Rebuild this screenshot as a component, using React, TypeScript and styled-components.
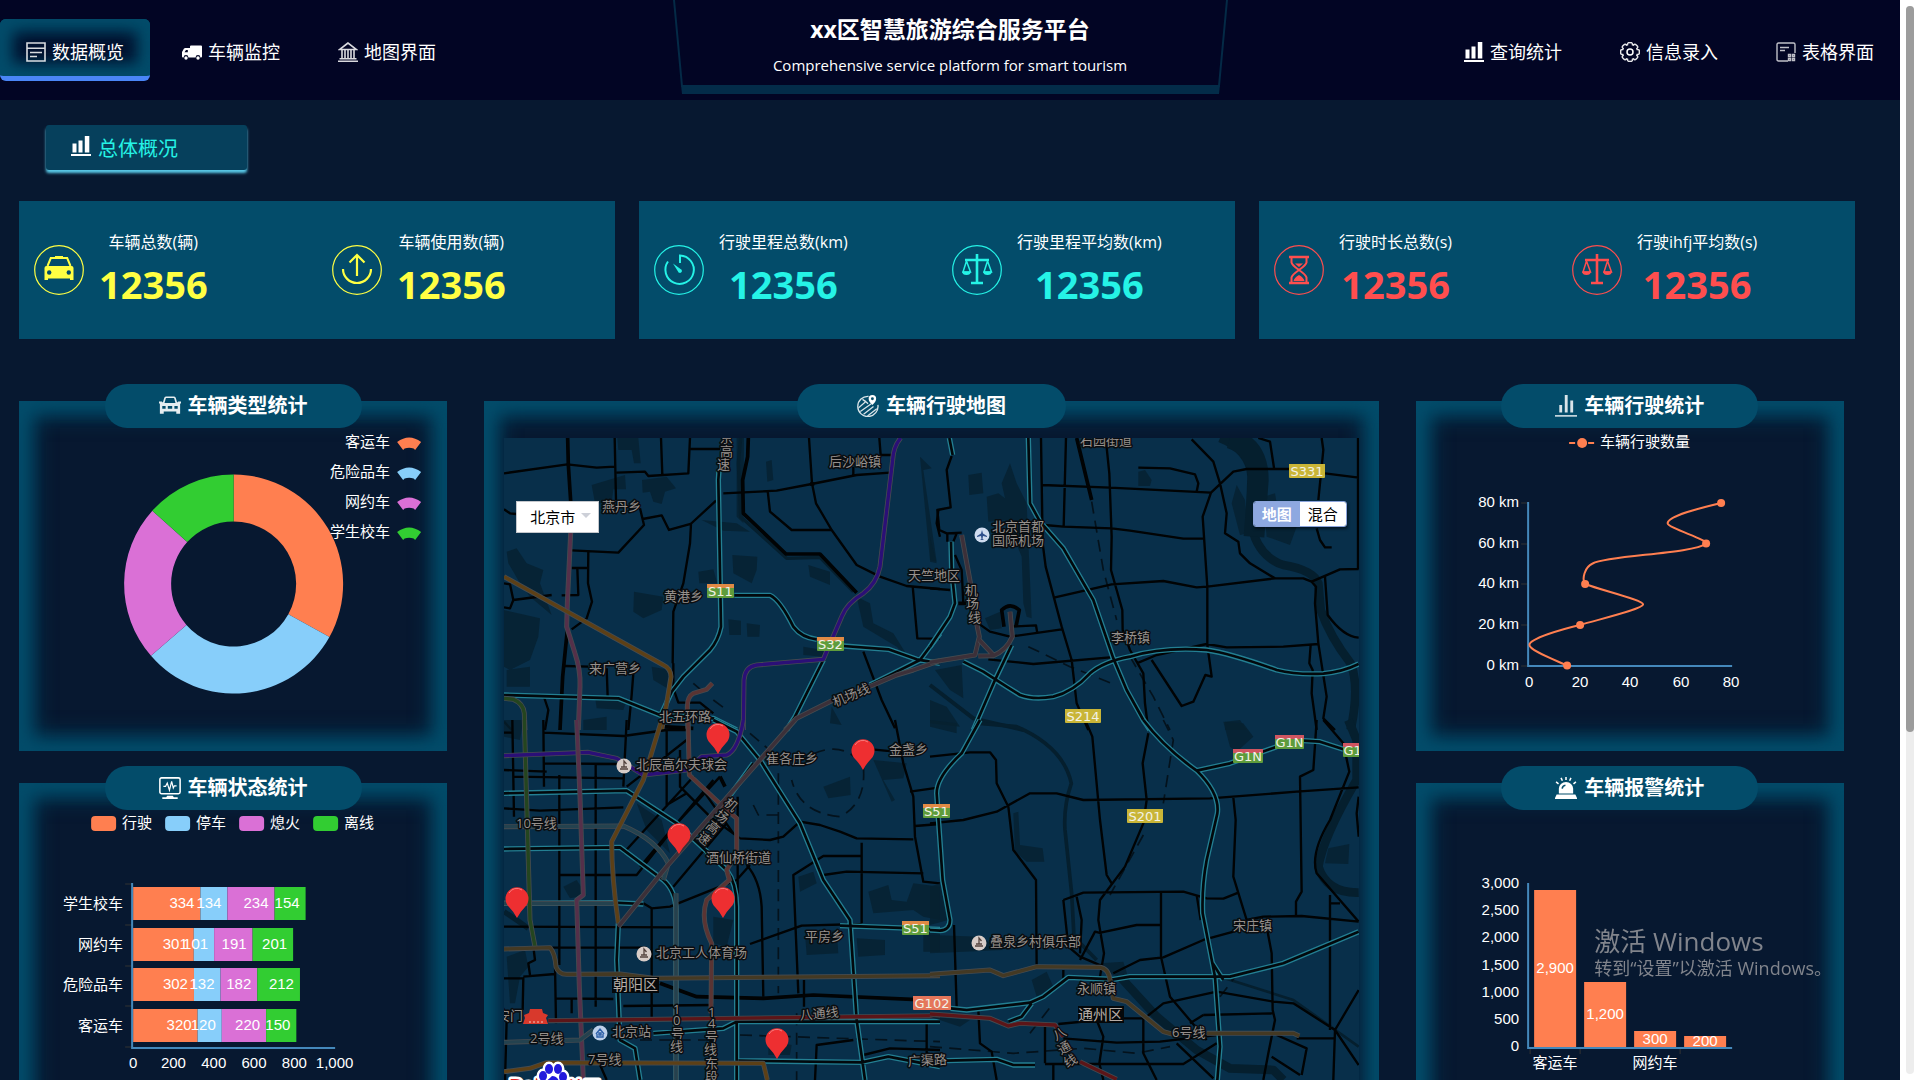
import React from "react";
import styled, { createGlobalStyle, css } from "styled-components";

const colors = {
  page: "#071830",
  header: "#020524",
  panel: "#034c6a",
  axis: "#4488bb",
  orange: "#ff7f50",
  blue: "#87cefa",
  purple: "#da70d6",
  green: "#32cd32",
};

const uiFont = '"Open Sans", "Noto Sans CJK SC", sans-serif';
const chartFont = '"Liberation Sans", "Noto Sans CJK SC", sans-serif';

const GlobalStyle = createGlobalStyle`
  * { box-sizing: border-box; }
  body {
    margin: 0;
    background: ${colors.page};
    color: #fff;
    font-family: ${uiFont};
    overflow: hidden;
  }
  h1, h2, h3, p, ul, dl, dd { margin: 0; padding: 0; }
`;

const innerGlow = (offset: number, blur: number) => css`
  box-shadow:
    inset ${offset}px 0 ${blur}px ${colors.panel},
    inset -${offset}px 0 ${blur}px ${colors.panel},
    inset 0 ${offset}px ${blur}px ${colors.panel},
    inset 0 -${offset}px ${blur}px ${colors.panel};
`;

/* ---------- shell ---------- */

const Shell = styled.div`
  display: flex;
  height: 100vh;
  overflow: hidden;
`;

const Page = styled.div`
  flex: 1;
  min-width: 0;
`;

const ScrollRail = styled.div`
  flex: 0 0 20px;
  padding: 6px;
  background: #fff;
`;

const ScrollTrack = styled.div`
  height: 100%;
  border-radius: 4px;
  background: #ededed;
`;

const ScrollThumb = styled.div`
  height: 68%;
  border-radius: 4px;
  background: #9c9c9c;
`;

/* ---------- header ---------- */

const Header = styled.header`
  display: flex;
  justify-content: space-between;
  height: 100px;
  background: ${colors.header};
`;

const Nav = styled.nav`
  display: flex;
  gap: 6px;
  padding-top: 19px;
`;

const NavLink = styled.a<{ $active?: boolean }>`
  display: flex;
  align-items: center;
  justify-content: center;
  gap: 6px;
  width: 150px;
  height: 62px;
  padding-top: 8px;
  border-bottom: 5px solid transparent;
  border-radius: 6px;
  color: #fff;
  font-size: 18px;
  line-height: 24px;
  text-decoration: none;
  ${(p) =>
    p.$active &&
    css`
      background: #030f2c;
      border-bottom-color: #4a86f7;
      ${innerGlow(12, 18)}
    `}
`;

const Brand = styled.div`
  position: relative;
  width: 555px;
  padding-top: 14px;
  text-align: center;
`;

const BrandFrame = styled.svg`
  position: absolute;
  top: 0;
  left: 0;
  width: 100%;
  height: 96px;
`;

const BrandTitle = styled.h1`
  position: relative;
  font-size: 23px;
  line-height: 30px;
`;

const BrandSubtitle = styled.p`
  position: relative;
  padding-top: 9px;
  font-size: 15px;
  line-height: 24px;
`;

/* ---------- overview ---------- */

const SectionTag = styled.h2`
  display: flex;
  gap: 7px;
  width: 201px;
  height: 45px;
  margin: 25px 0 0 46px;
  padding: 9px 25px;
  border-radius: 3px;
  background: #06405c;
  box-shadow: 0 3px 3px #5acbea;
  color: #25f3e6;
  font-size: 20px;
  font-weight: 400;
  line-height: 30px;

  svg {
    margin-top: 2px;
    color: #fff;
  }
`;

const StatRow = styled.section`
  display: grid;
  grid-template-columns: repeat(3, 1fr);
  gap: 24px;
  padding: 31px 45px 0 19px;
`;

const StatCard = styled.div`
  display: grid;
  grid-template-columns: 1fr 1fr;
  height: 138px;
  background: ${colors.panel};
`;

const Stat = styled.dl<{ $color: string }>`
  display: flex;
  gap: 15px;
  padding: 28px 0 0 15px;
  color: ${(p) => p.$color};
`;

const StatBadge = styled.span`
  margin-top: 16px;
  width: 50px;
  height: 50px;
`;

const StatText = styled.div`
  text-align: center;
`;

const StatLabel = styled.dt`
  color: #fff;
  font-size: 16px;
  line-height: 26px;
`;

const StatValue = styled.dd`
  font-size: 38px;
  font-weight: 700;
  line-height: 58px;
`;

/* ---------- panels ---------- */

const Board = styled.main`
  display: grid;
  grid-template-columns: 428fr 894fr 428fr;
  gap: 37px;
  padding: 62px 56px 0 19px;
`;

const Column = styled.div`
  display: flex;
  flex-direction: column;
  gap: 32px;
`;

const PanelBox = styled.section<{ $tall?: boolean }>`
  height: ${(p) => (p.$tall ? "732px" : "350px")};
  ${innerGlow(14, 22)}
`;

const PanelTitle = styled.h3<{ $share: string }>`
  position: relative;
  display: flex;
  align-items: center;
  justify-content: center;
  gap: 7px;
  width: ${(p) => p.$share};
  height: 44px;
  margin: -17px auto 0;
  border-radius: 22px;
  background: ${colors.panel};
  font-size: 20px;
  line-height: 28px;
`;

const Chart = styled.svg`
  display: block;
  width: 100%;
  height: 323px;
  font-family: ${chartFont};
  font-size: 15px;
`;

const ChartText = styled.text`
  fill: #fff;
`;

/* ---------- map ---------- */

const MapArea = styled.div`
  position: relative;
  height: 682px;
  margin: 10px 20px 0;
  overflow: hidden;
  background: #082f4a;
`;

const MapCanvas = styled.svg`
  display: block;
  width: 100%;
  height: 100%;
  font-family: ${uiFont};
`;

const MapLabel = styled.text`
  fill: #96908c;
  stroke: #0a0d10;
  stroke-width: 3px;
  stroke-linejoin: round;
  paint-order: stroke;
  font-size: 13px;
`;

const DistrictLabel = styled.text`
  fill: #b5aca6;
  font-size: 15px;
`;

const ShieldText = styled.text`
  fill: #f2f2e6;
  font-family: "DejaVu Sans", sans-serif;
  font-size: 13px;
  text-anchor: middle;
`;

const CityPicker = styled.label`
  position: absolute;
  top: 63px;
  left: 12px;
`;

const CitySelect = styled.select`
  width: 83px;
  height: 32px;
  padding: 0 0 0 13px;
  border: 1px solid #c4c7cc;
  border-radius: 0;
  appearance: none;
  background: #fff;
  color: #000;
  font-family: ${uiFont};
  font-size: 15px;
`;

const Caret = styled.span`
  position: absolute;
  top: 12px;
  right: 8px;
  border: 5px solid transparent;
  border-top-color: #cdd0d8;
  pointer-events: none;
`;

const LayerSwitch = styled.div`
  position: absolute;
  top: 63px;
  right: 12px;
  display: flex;
  border: 1px solid #8ba4dc;
  border-radius: 3px;
  overflow: hidden;
  box-shadow: 1px 2px 3px rgba(0, 0, 0, 0.5);
`;

const LayerButton = styled.button<{ $active?: boolean }>`
  width: 46px;
  height: 24px;
  padding: 0;
  border: 0;
  background: ${(p) => (p.$active ? "#8ea8e0" : "#fff")};
  color: ${(p) => (p.$active ? "#fff" : "#000")};
  font-family: ${uiFont};
  font-size: 15px;
  font-weight: ${(p) => (p.$active ? 700 : 400)};
  line-height: 24px;
`;

const SystemNotice = styled.aside`
  position: fixed;
  right: 88px;
  bottom: 99px;
  color: rgba(150, 152, 156, 0.85);
  font-size: 18px;
  line-height: 26px;
  pointer-events: none;
`;

const SystemNoticeTitle = styled.p`
  font-size: 26px;
  line-height: 28px;
`;

/* ---------- icons ---------- */

type IconProps = { size?: number };

const Glyph = ({ size = 20, children }: IconProps & { children: React.ReactNode }) => (
  <svg width={size} height={size} viewBox="0 0 20 20" fill="none" stroke="currentColor" strokeWidth="1.4" aria-hidden="true">
    {children}
  </svg>
);

const ListIcon = () => (
  <Glyph>
    <g opacity="0.85">
      <path d="M1 1h18v18H1zM1 6.200h18" strokeWidth="1.600" />
      <path d="M4 10.500h12M4 14.500h7" strokeWidth="1.600" />
    </g>
  </Glyph>
);

const TruckIcon = () => (
  <Glyph>
    <g fill="currentColor" stroke="none">
      <path d="M8 4.500Q8 3.500 9 3.500h10q1 0 1 1v10q0 1-1 1h-.6a2.400 2.400 0 0 0-4.800 0H6.400a2.400 2.400 0 0 0-4.800 0H1q-1 0-1-1V10l2-3.500Q2.600 6 3.300 6H8z" />
      <circle cx="4" cy="16" r="1.700" />
      <circle cx="16" cy="16" r="1.700" />
    </g>
    <path d="M2.500 10.200L4 8h1.800v2.200z" fill={colors.header} stroke="none" />
  </Glyph>
);

const BankIcon = () => (
  <Glyph>
    <g opacity="0.85">
      <path d="M10 1L1.500 7.500h17zM0 19.200h20M1.500 16.800h17" strokeWidth="1.600" />
      <path d="M4 8v9M7 8v9M10 8v9M13 8v9M16 8v9" strokeWidth="1.600" />
    </g>
  </Glyph>
);

const BarsIcon = () => (
  <Glyph>
    <path d="M1.500 7.500h4v9h-4zM7.500 4.500h4v12h-4zM13.800 0h4.500v16.500h-4.500zM0 18h20v2H0z" fill="currentColor" stroke="none" />
  </Glyph>
);

const gearOutline = Array.from({ length: 8 }, (_, i) => {
  const point = (r: number, deg: number) => {
    const a = (deg * Math.PI) / 180;
    return `${(10 + r * Math.sin(a)).toFixed(2)} ${(10 - r * Math.cos(a)).toFixed(2)}`;
  };
  const a = i * 45;
  return `${i === 0 ? "M" : "L"}${point(7.6, a - 19)}Q${point(10.2, a - 15)} ${point(9.3, a)}Q${point(10.2, a + 15)} ${point(7.6, a + 19)}`;
}).join("");

const GearIcon = () => (
  <Glyph>
    <path d={`${gearOutline}Z`} opacity="0.9" strokeWidth="1.500" />
    <circle cx="10" cy="10" r="3" strokeWidth="1.500" />
  </Glyph>
);

const FormIcon = () => (
  <Glyph>
    <g opacity="0.75">
      <path d="M12 19H2.500Q1 19 1 17.500v-15Q1 1 2.500 1h15Q19 1 19 2.500V11" />
      <path d="M4 5.500h9M4 8.500h5" strokeWidth="1.700" />
      <path d="M12.500 12.500h2v2h-2zM16.500 12.500h2v2h-2zM12.500 16.500h2v2h-2zM16.500 16.500h2v2h-2z" />
    </g>
  </Glyph>
);

const CarIcon = () => (
  <Glyph size={22}>
    <g opacity="0.9">
      <path d="M4 8L5.500 2.800Q5.800 2 6.600 2h6.800q.8 0 1.100.8L16 8" strokeWidth="1.500" />
      <path d="M0 6h2.500l1.500 1.200h12L17.500 6H20v1.800h-.8V17h-3.500v-2H4.300v2H.8V7.800H0z" fill="currentColor" stroke="none" />
      <path d="M3 10h3v2.500H3zM14 10h3v2.500h-3zM8 10h4v2.500H8z" fill={colors.panel} stroke="none" />
    </g>
  </Glyph>
);

const MonitorIcon = () => (
  <Glyph size={22}>
    <rect x=".8" y=".8" width="18.400" height="14.400" rx="1.500" />
    <path d="M4 8.500h2l1.500-3 2 6.500 2-8 1.500 6 1-2h2" strokeWidth="1.100" />
    <path d="M7.500 17h5l1 1.500H17V20H3v-1.500h3.500z" fill="currentColor" stroke="none" />
  </Glyph>
);

const RouteIcon = () => (
  <Glyph size={22}>
    <g opacity="0.85">
      <path d="M10.500 1.200A9.200 9.200 0 1 0 19 9" strokeWidth="1.200" />
      <path d="M1.500 11.500L8 6l2 2M3 15L13 8M6 17.500L15 10.500M9.500 19L18 12.500M5 4l3 2" strokeWidth="1.200" />
    </g>
    <path d="M14 0a3.400 3.400 0 0 1 3.400 3.400Q17.400 6 14 9 10.600 6 10.600 3.400A3.400 3.400 0 0 1 14 0z" fill="currentColor" stroke="none" />
    <circle cx="14" cy="3.400" r="1.300" fill={colors.panel} stroke="none" />
  </Glyph>
);

const ChartIcon = () => (
  <Glyph size={22}>
    <path d="M0 19h20" strokeWidth="1.200" />
    <path d="M5.200 16V9M10.200 16V0M15.200 16V5" strokeWidth="2.600" opacity="0.85" />
  </Glyph>
);

const AlarmIcon = () => (
  <Glyph size={22}>
    <path d="M3.500 15v-4.500a6.500 6 0 0 1 13 0V15zM1.500 16h17l1.500 3v1H0v-1z" fill="currentColor" stroke="none" />
    <path d="M6.500 10.500a3.500 3.500 0 0 1 3-3" stroke={colors.panel} />
    <path d="M10 0v2.800M5.500.8l1.200 2.600M14.500.8l-1.200 2.600M1 4.500l2.200 1.800M19 4.500l-2.200 1.800" />
  </Glyph>
);

const Badge = ({ children }: { children: React.ReactNode }) => (
  <svg width="50" height="50" viewBox="0 0 50 50" fill="none" stroke="currentColor" strokeWidth="2" aria-hidden="true">
    <circle cx="25" cy="25" r="24.300" strokeWidth="1.200" />
    {children}
  </svg>
);

const TaxiBadge = () => (
  <Badge>
    <path d="M13.500 21l3.300-8h16.400l3.300 8M21 12h8" strokeWidth="2" />
    <path d="M10.500 23q0-2 2-2h25q2 0 2 2v12H36v-1.500H14V35h-3.500z" fill="currentColor" stroke="none" />
    <circle cx="15.200" cy="27.500" r="2.200" fill={colors.panel} stroke="none" />
    <circle cx="34.800" cy="27.500" r="2.200" fill={colors.panel} stroke="none" />
  </Badge>
);

const UploadBadge = () => (
  <Badge>
    <path d="M25 31V10M17.500 17.500L25 10l7.500 7.500M11 24a14 14 0 0 0 28 0" strokeWidth="2.200" />
  </Badge>
);

const TimerBadge = () => (
  <Badge>
    <path d="M26 18v-7.500a14.200 14.200 0 1 1-12 6" />
    <path d="M19 18.500l7.500 5.500a2 2 0 1 1-2.500 2.500z" fill="currentColor" stroke="none" />
  </Badge>
);

const ScaleBadge = () => (
  <Badge>
    <path d="M25 9v28M13 15h24M19 38h12" strokeWidth="2.600" />
    <path d="M14.500 16L11 27h7.500zM35.500 16L32 27h7.500z" strokeWidth="1.500" />
    <path d="M10 26.500h9q-.5 3.500-4.500 3.500T10 26.500zM31 26.500h9q-.5 3.500-4.500 3.500T31 26.500z" fill="currentColor" stroke="none" />
  </Badge>
);

const HourglassBadge = () => (
  <Badge>
    <path d="M15 12h20M15 38h20" strokeWidth="2.600" />
    <path d="M17.500 13v4.500Q18 20 25 25q7-5 7.500-7.500V13M17.500 37v-4.500Q18 30 25 25q7 5 7.500 7.500V37" />
    <path d="M21 18.500h8l-4 3.500zM19.500 36q1-3.500 5.500-6 4.500 2.500 5.500 6z" fill="currentColor" stroke="none" />
  </Badge>
);

/* ---------- charts ---------- */

const vehicleTypes = [
  { name: "客运车", value: 335, color: colors.orange },
  { name: "危险品车", value: 310, color: colors.blue },
  { name: "网约车", value: 234, color: colors.purple },
  { name: "学生校车", value: 135, color: colors.green },
];

const DonutChart = () => {
  const cx = 214.5;
  const cy = 183;
  const outer = 109.5;
  const inner = 62.5;
  const total = vehicleTypes.reduce((sum, t) => sum + t.value, 0);
  const at = (r: number, a: number) => `${(cx + r * Math.sin(a)).toFixed(2)} ${(cy - r * Math.cos(a)).toFixed(2)}`;
  let angle = 0;
  return (
    <Chart viewBox="0 27 428 323" role="img" aria-label="车辆类型统计">
      {vehicleTypes.map((t) => {
        const start = angle;
        angle += (t.value / total) * Math.PI * 2;
        return (
          <path
            key={t.name}
            fill={t.color}
            d={`M${at(outer, start)}A${outer} ${outer} 0 0 1 ${at(outer, angle)}L${at(inner, angle)}A${inner} ${inner} 0 0 0 ${at(inner, start)}Z`}
          />
        );
      })}
      {vehicleTypes.map((t, i) => (
        <g key={t.name} transform={`translate(0 ${41 + i * 30})`}>
          <ChartText x="371" y="5" textAnchor="end">{t.name}</ChartText>
          <path d="M378 0Q390 -9 402 0L396 8L394.500 6.500Q390 5 385.500 6.500L384 8Z" fill={t.color} />
        </g>
      ))}
    </Chart>
  );
};

const statusSeries = [
  { name: "行驶", color: colors.orange },
  { name: "停车", color: colors.blue },
  { name: "熄火", color: colors.purple },
  { name: "离线", color: colors.green },
];

const statusRows = [
  { name: "学生校车", values: [334, 134, 234, 154] },
  { name: "网约车", values: [301, 101, 191, 201] },
  { name: "危险品车", values: [302, 132, 182, 212] },
  { name: "客运车", values: [320, 120, 220, 150] },
];

const StatusChart = () => (
  <Chart viewBox="0 27 428 323" role="img" aria-label="车辆状态统计">
    {statusSeries.map((s, i) => (
      <g key={s.name} transform={`translate(${72 + i * 74} 0)`}>
        <rect y="33" width="25" height="15" rx="4" fill={s.color} />
        <ChartText x="31" y="45">{s.name}</ChartText>
      </g>
    ))}
    {[101, 142, 183, 223, 264].map((y) => (
      <path key={y} d={`M106 ${y}h7`} stroke="#333" />
    ))}
    {statusRows.map((row, r) => {
      const y = 104 + Math.round(r * 40.6);
      let sum = 0;
      const parts = row.values.map((v) => {
        const x = 114 + sum * 0.2015;
        sum += v;
        return { x, end: 114 + sum * 0.2015, v };
      });
      return (
        <g key={row.name}>
          <ChartText x="104" y={y + 22} textAnchor="end">{row.name}</ChartText>
          {parts.map((p, i) => (
            <rect key={i} x={p.x} y={y} width={p.end - p.x} height="33" fill={statusSeries[i].color} />
          ))}
          {parts.map((p, i) => (
            <ChartText key={i} x={p.end - 6} y={y + 21} textAnchor="end">{p.v}</ChartText>
          ))}
        </g>
      );
    })}
    <path d="M113 100v165M112 265h204" stroke={colors.axis} strokeWidth="2" />
    {["0", "200", "400", "600", "800", "1,000"].map((t, i) => (
      <ChartText key={t} x={114 + i * 40.3} y="285" textAnchor="middle">{t}</ChartText>
    ))}
  </Chart>
);

const LineChart = () => (
  <Chart viewBox="0 27 428 323" role="img" aria-label="车辆行驶统计">
    <path d="M153 42h6M172 42h6" stroke={colors.orange} strokeWidth="2" />
    <circle cx="166" cy="42" r="5" fill={colors.orange} />
    <ChartText x="184" y="46">车辆行驶数量</ChartText>
    {[80, 60, 40, 20, 0].map((v, i) => (
      <g key={v}>
        <path d={`M105 ${102 + Math.round(i * 40.7)}h7`} stroke="#333" />
        <ChartText x="103" y={106 + Math.round(i * 40.7)} textAnchor="end">{`${v} km`}</ChartText>
      </g>
    ))}
    {[0, 20, 40, 60, 80].map((v, i) => (
      <ChartText key={v} x={113 + Math.round(i * 50.5)} y="286" textAnchor="middle">{v}</ChartText>
    ))}
    <path d="M112 101v165M112 265h204" stroke={colors.axis} strokeWidth="2" />
    <path
      d="M151 264.500C134 257 113.300 249 113.300 244C113.300 237.500 147 228 163.700 224C184 218 227 208 227 203.300C227 199 184 189 169 183C165.500 178 168.500 166 176.500 162.500C192 154 277 153 290 142.500C293 139 251.500 127 251.500 122.300C251.500 115 284 107 305 102"
      fill="none"
      stroke={colors.orange}
      strokeWidth="2"
    />
    {[[151, 264.5], [164, 224], [169, 183], [290, 142.5], [305, 102]].map(([x, y]) => (
      <circle key={y} cx={x} cy={y} r="4" fill={colors.orange} />
    ))}
  </Chart>
);

const alarms = [2900, 1200, 300, 200];

const AlarmChart = () => (
  <Chart viewBox="0 27 428 323" role="img" aria-label="车辆报警统计">
    {["3,000", "2,500", "2,000", "1,500", "1,000", "500", "0"].map((t, i) => (
      <ChartText key={t} x="103" y={105 + Math.round(i * 27.2)} textAnchor="end">{t}</ChartText>
    ))}
    {alarms.map((v, i) => {
      const h = Math.round(v * 0.0543);
      return (
        <g key={v}>
          <rect x={118 + i * 50} y={264 - h} width="42" height={h} fill={colors.orange} />
          <ChartText x={139 + i * 50} y={269 - Math.round(h / 2)} textAnchor="middle">{v.toLocaleString("en-US")}</ChartText>
        </g>
      );
    })}
    <path d="M114 265v6M164 265v6M264 265v6" stroke="#333" />
    <path d="M112 100v165M111 265h205" stroke={colors.axis} strokeWidth="2" />
    <ChartText x="139" y="285" textAnchor="middle">客运车</ChartText>
    <ChartText x="239" y="285" textAnchor="middle">网约车</ChartText>
  </Chart>
);

/* ---------- map data, one entry per quarter of the canvas ---------- */

type Rail = { color: string; d: string };
type Tile = { x: number; y: number; areas: string; rivers?: [string, number][]; roads: string; bold?: string; dashes?: string; highways: string; rails: Rail[] };

const rail = {
  violet: "#2b0f77",
  rose: "#55304a",
  amber: "#5d4016",
  brick: "#5a3433",
  mauve: "#3c3039",
  olive: "#24451f",
  khaki: "#443923",
  steel: "#24424f",
  red: "#5c1518",
};

const tiles: Tile[] = [
  {
    x: -24,
    y: -68,
    areas:
      "M412 204H475L482 280H462L455 240H415ZM335 345L435 315L438 358H400L395 400H345ZM486 330L560 320L588 355L555 365L545 402L520 395L510 365L488 368ZM858 275L875 270L880 330L862 335ZM757 555L832 560L830 600L815 640L760 610ZM655 605L700 598L712 640H658ZM745 748L783 752V795H748ZM800 760L840 765L838 800H802ZM462 665L550 680L545 720L490 745L460 725ZM985 585L1050 605V645L990 620ZM80 545L110 535L140 580L190 600L180 640L215 735L150 680L120 640L85 580ZM72 720L180 745L175 800L150 870L90 900L72 890ZM515 890L570 900V960L520 930ZM970 830L1030 840V860L970 855ZM665 450L770 460L810 485L730 482ZM1320 260L1355 295L1330 300L1370 575L1350 570ZM1130 680L1170 700L1180 760L1240 790L1290 870L1250 830L1150 770ZM80 900L150 890V950H80ZM345 980L440 990L430 1020L350 1015ZM1055 1010L1085 1065L1050 1060ZM310 1050L380 1040V1080H310ZM770 204H792L790 460L770 440Z",
    rivers: [["M782 204L775 280L782 440L920 565L1020 562L1120 665", 10]],
    roads:
      "M72 310L262 283L350 293L405 290M404 204L408 390M410 308L495 305L505 318L625 310L630 204M543 204L547 315M632 237H720M72 418L90 430L108 432M480 415L492 465L415 548L275 541M488 447L545 436L567 480L632 462L708 392M633 462L630 520L610 640L580 725L578 880M730 370L890 362L995 342L1130 315L1230 308M987 204L996 340L1008 400L1055 480L1130 585L1200 620L1280 648L1380 657M1055 480H935L870 425L863 362M1198 204L1202 255H1235M1120 290V315M325 541L324 640L336 695L320 745L275 778M292 595L295 675L245 676M275 594H324M72 640L90 643L100 690L90 715L72 712M100 690L215 675M255 888L325 890M460 910L455 975L445 1080M380 895L383 980M1298 648L1312 805L1380 806M1150 845L1205 990L1245 1075M580 880V955L595 998H660L700 1030M1375 420L1370 460L1380 500M72 1055L95 1080M190 975L205 1020L195 1080",
    bold: "M263 204L265 285L272 393M805 204L803 260L788 330L790 430L918 552H1020L1130 668M262 780L248 920L240 1080M990 342H1003M545 1070L640 1075",
    dashes: "M640 940L680 975M700 990L740 1020",
    highways:
      "M717 300L715 330L723 770Q715 810 690 840L610 920L575 965L545 1030M763 676H870Q900 690 940 770Q965 803 1010 808M1090 828L1225 838L1310 868L1380 880M1030 870L945 1040L920 1080M1380 790L1320 870L1240 910L1170 945M72 975L415 985L540 1035L700 1045L770 1080",
    rails: [
      { color: rail.violet, d: "M1262 204Q1240 230 1238 270L1200 590Q1190 640 1150 670Q1100 700 1085 740L1055 810L1030 868L830 885Q795 890 792 930L790 1080" },
      { color: rail.rose, d: "M272 489L262 700L260 770L285 850Q302 900 300 950L295 1080" },
      { color: rail.amber, d: "M72 620L550 885Q572 895 573 920L560 1000L545 1080" },
      { color: rail.brick, d: "M697 940L680 958L640 970Q622 980 622 1010L624 1080" },
      { color: rail.mauve, d: "M1380 872L1300 900L1250 915L1180 945L1060 990L950 1045L915 1080" },
      { color: rail.olive, d: "M72 985L100 988Q130 1000 133 1030L135 1080" },
    ],
  },
  {
    x: 426,
    y: -68,
    areas:
      "M115 315L155 308L160 370L118 375ZM170 380L205 370L225 385L215 340L240 280L260 340L290 400L305 745L290 740L280 700L275 560L230 450L175 455ZM625 305L645 300L665 330L660 348H625ZM920 345L945 390L955 490L930 495L905 400ZM1000 380L1035 370L1045 430L1100 470L1080 525L1010 500ZM165 745L210 725L215 775L180 780ZM15 900L95 885L100 985L60 960ZM0 990L50 1010L90 1070L0 1060ZM885 1055L930 1050L950 1080H885ZM0 500L20 580L0 575Z",
    rivers: [
      ["M870 204Q960 240 965 320Q960 420 965 470Q985 560 1060 585Q1150 600 1165 640L1172 720Q1200 800 1262 880Q1290 950 1262 1080", 26],
      ["M900 204Q985 230 985 330L972 500", 62],
      ["M0 945L130 1045L280 1080", 12],
    ],
    roads:
      "M333 204L338 520L347 590L395 770L425 870L440 1000L475 1080M408 204L401 470M527 204L538 310L545 500L543 600L560 660L577 720L578 780L600 840L640 910L645 1000L655 1080M336 345L540 353L843 368M843 368L818 440L832 650V825L845 920L826 915L790 995L755 1008L665 870M625 293L720 295L795 313L805 340L800 365M343 465L400 470L545 475L600 482L760 506H820M843 368L910 305L950 297H1080M1185 310L1286 323M785 208L850 275L870 340L890 430L885 490L925 515L930 550L960 580L1035 625M375 682L545 643L700 633L800 652L832 650L1035 625H1120L1145 635L1230 598L1286 597M1284 204V597M985 204L1020 215L1033 300M1175 204L1180 240L1165 390M1160 475L1170 510L1185 532H1205M620 880L680 855L830 822L890 832L1060 830L1166 822M175 868L310 882L540 862M1145 635L1158 650L1155 700L1165 820L1190 980L1180 1045L1215 1080M1185 620L1193 735Q1240 800 1286 803M1142 825L1138 880L1148 900L1145 970L1160 1080M65 258L50 300L62 412L22 420L28 480L50 490L95 488M52 490V515M80 490L70 515M145 760L180 785L240 800L395 778M240 770L318 766L322 790M100 700L95 600L75 555M0 655L60 660",
    bold: "M440 204L485 390M222 770L215 720Q240 695 268 720L258 770M85 700H108",
    dashes: "M485 395L520 600L560 750M295 830L420 890L545 940M600 860L670 980L720 1080",
    highways:
      "M295 204L300 400L330 455L400 535L490 690L550 865L590 960L640 1050L660 1080M58 204L68 255M63 515L65 600L75 700L60 740L0 830M100 875L160 905L230 950L270 975Q310 990 370 980Q430 965 480 910Q520 875 600 860Q700 830 830 840Q900 850 1040 900Q1100 915 1180 911Q1240 905 1286 882M245 825L195 930L130 1080",
    rails: [
      { color: rail.mauve, d: "M95 495L125 660L140 760L148 800L135 855L0 877" },
      { color: rail.mauve, d: "M240 725L247 800Q230 840 190 857L145 858M148 810L190 855" },
    ],
  },
  {
    x: -24,
    y: 282,
    areas:
      "M1030 200L1110 170L1112 225L1045 235ZM1180 120L1280 130L1270 175L1210 180L1245 240L1235 245ZM470 250L545 300L570 400L500 330ZM955 470L1000 455L1010 490L960 515ZM1165 515L1225 495L1235 540L1280 545L1300 490L1380 500V600L1330 590L1300 570L1180 580ZM975 640L1070 630L1075 700L980 705ZM1130 655L1215 660V705L1135 710ZM700 590L760 600L740 680L700 670ZM80 710L135 690L145 740L120 770L105 850H90ZM250 500L290 480L320 525L270 535ZM72 0H130L120 60L72 50ZM865 960L935 975L930 1005H865ZM1330 630L1380 640V695H1330Z",
    rivers: [["M72 575L110 600L145 625", 16]],
    roads:
      "M97 0L102 290M190 0L192 200M238 165V735M347 130V860M515 565V890M440 0L430 200M72 38H97M190 38L430 48L560 30M72 150L200 155M102 170L430 175M190 130L430 132M72 265L180 272L430 262M240 465H470L600 300L720 170M72 620L580 622M200 683H500M230 835L400 837M430 858L700 855M225 735L228 910M72 775H130L128 870M130 770L225 762M275 835V880M490 550L515 565L570 560L720 500M160 680L165 720L145 730L150 765M560 30V260M560 30H620M600 90V200L690 290L780 355M560 255L620 220M430 400L640 170M480 440L700 180M580 500L740 310M640 170L760 340M780 355L870 360L910 350L960 305L1020 315L1080 335L1130 355L1300 358M1145 368V610M1145 408H1030L940 465L955 820M1030 465L1100 455L1330 460M773 230V530M800 435Q840 480 845 560L850 830M810 672L965 617L1145 612M1245 0L1270 130L1300 230L1305 350L1330 485L1380 490M1290 215L1375 203M1305 318L1380 312M1145 85L1245 95M972 780V860M1340 900V1000L1380 1010M1005 1080L1010 975L1120 960M1150 1005L1230 985L1380 990M80 900L75 1080M345 1000L380 1080M440 200L530 130L620 60M430 150L560 140M720 500L770 480L810 435",
    bold: "M540 790L650 830L850 835L1000 825L1380 842M720 170L735 200",
    dashes:
      "M950 130Q1080 40 1150 140Q1160 250 1080 290Q960 280 935 180M895 160V820M780 945L1380 965M820 255L835 285H895M810 40L880 100M480 960H700M950 880V1080",
    highways:
      "M72 220L440 212L590 310L740 450Q770 490 770 560V1080M72 387L420 382L550 480Q590 515 588 580V1080M700 0L770 35L840 120L960 310L1030 480L1110 600L1130 900L1155 1080M1080 617L1380 628M415 610L410 720L420 960L465 985L480 1080M520 940L730 925L770 905L1380 905M775 1022L1145 1027L1225 1010L1380 1040M820 130L740 240M72 550L400 548L490 552",
    rails: [
      { color: rail.steel, d: "M72 320L430 318Q530 360 565 430L550 480" },
      { color: rail.steel, d: "M588 520V1080M72 550L400 550" },
      { color: rail.olive, d: "M133 0L150 600L165 680" },
      { color: rail.khaki, d: "M72 687L210 683Q225 700 228 740Q235 762 260 763L420 762L520 775L1380 767" },
      { color: rail.violet, d: "M72 107L325 97L410 115L490 165L620 150L665 110L740 105Q775 90 790 0" },
      { color: rail.rose, d: "M290 0L300 230L310 525L290 540L298 800L310 1080" },
      { color: rail.amber, d: "M545 0L490 180L395 365Q395 470 415 610" },
      { color: rail.brick, d: "M624 0L628 165L740 270L770 295V400L740 450L748 480L680 540Q660 600 695 670L693 880" },
      { color: rail.mauve, d: "M945 0L730 245L560 440L415 620" },
      { color: rail.steel, d: "M72 967L300 960L340 930" },
      { color: rail.red, d: "M205 902L1380 887" },
      { color: rail.amber, d: "M72 1055L150 1045L200 1028L850 1030L862 1080" },
    ],
  },
  {
    x: 426,
    y: 282,
    areas:
      "M880 5L940 10L970 50L920 95L900 80ZM0 0L80 10V40L0 20ZM250 280L265 275L270 375L338 385L343 425L290 425L255 395ZM1195 385L1258 372L1255 432L1185 430ZM0 500L30 490L55 600L0 615ZM0 645L150 650L220 690L0 700ZM305 780L350 755L370 800L320 830ZM510 730L580 725L600 790L540 760ZM0 890L120 900L90 920Z",
    rivers: [
      ["M150 10L260 20Q400 80 424 190Q400 260 405 330L425 520L432 650L500 720", 11],
      ["M1255 0L1280 60V180Q1180 350 1165 440Q1190 520 1286 518", 26],
      ["M570 770L680 890L800 990L900 1045L1030 1050L1060 1080", 26],
      ["M870 770L1090 840L1286 980", 8],
    ],
    roads:
      "M0 110L120 97H180L198 120L200 190L235 260L250 390L318 480L320 740M0 310L100 300L200 275L300 220H380L460 240L840 235L1100 215L1286 202M470 10L487 50L510 300L530 465L545 490M655 40L638 130L650 240L640 310L585 440L510 540L505 600L522 700L510 770M400 540L460 518L760 515L830 535L880 536L925 518M400 540L415 680L450 710L520 740M440 530L455 600L450 700M693 518V710L720 830L830 960M515 640L495 635L450 720M515 637L620 615H690M550 760L630 720L700 712L820 660L930 630M910 232L917 300L910 470L950 600L1010 620L1025 700L1028 870L1035 900L1015 1000L1000 1080M800 525L812 600M950 600L1000 590L1115 588L1286 605M1160 0L1150 150L1110 170L1115 515L1098 545V588M1180 0L1240 70L1258 155L1200 300Q1140 400 1160 460L1286 605M1200 525V930M650 890L700 850L860 815L1030 845M1030 845L1090 850L1215 930L1286 1035M1286 810L1215 930L1210 1080M820 885L1030 880M780 910L820 885M400 955L560 968L690 965L860 945M72 615L80 860M400 750V775M145 870L150 970L185 995L200 1080M345 920V1030M345 1032H760L860 970M640 895V1000L680 1080M500 900L520 950L508 1030L520 1080M370 1035V1080M385 912L560 895H640M1040 945L1130 985L1115 1065M1100 955H1215M1025 1010L1110 1065M740 970L850 1075M1286 230L1280 280L1286 350M1200 550H1230",
    dashes: "M700 0L730 60L700 250M640 345L540 525M0 980L250 1000L460 985L620 1000L720 980M300 940L370 850M870 830L920 765",
    highways:
      "M150 0L95 100Q20 170 20 220L38 480L60 600Q60 630 30 632L0 630M640 0Q700 80 800 152Q870 220 862 280L830 420Q815 500 818 580L855 770L870 980L862 1080M800 152L900 130L1040 80M1120 62L1170 65L1240 88M62 865L110 870L300 848L340 830L415 772L550 778L600 770H900L1060 730L1286 635M235 905L275 890L305 850M848 730L880 780M50 1022L200 1018L250 1035H315",
    rails: [
      { color: rail.khaki, d: "M0 763L180 750L220 767L320 740L510 742Q535 745 540 780L550 835L590 845L700 935L730 943M830 940H1090L1108 948" },
      { color: rail.red, d: "M0 882L180 895L235 918L270 910L375 915L400 950M450 1025L560 1078" },
    ],
  },
];

const placeNames: [string, number, number, number?][] = [
  ["后沙峪镇", 325, 28], ["燕丹乡", 98, 73], ["黄港乡", 160, 163], ["来广营乡", 85, 235],
  ["北五环路", 155, 283], ["天竺地区", 404, 142], ["石园街道", 576, 7], ["北京首都", 488, 93],
  ["国际机场", 488, 107], ["李桥镇", 607, 204], ["北辰高尔夫球会", 132, 331], ["崔各庄乡", 262, 325],
  ["金盏乡", 385, 316], ["10号线", 12, 390], ["酒仙桥街道", 202, 424], ["北京工人体育场", 152, 519],
  ["平房乡", 301, 503], ["安门", -7, 582], ["北京站", 108, 598], ["2号线", 26, 605],
  ["7号线", 84, 626], ["八通线", 296, 582, -5], ["广渠路", 404, 628, -3], ["宋庄镇", 729, 492],
  ["叠泉乡村俱乐部", 486, 508], ["永顺镇", 573, 555], ["6号线", 668, 599], ["机场线", 331, 269, -23],
];

/* names that run down a road: one position per character */
const stackedNames: { name: string; x: number[]; y: number[]; turn: number }[] = [
  { name: "京高速", x: [216, 216, 213], y: [4, 18, 31], turn: 0 },
  { name: "机场线", x: [461, 462, 464], y: [157, 170, 184], turn: 0 },
  { name: "机场高速", x: [219, 210, 201, 192], y: [366, 378, 389, 400], turn: 40 },
  { name: "10号线", x: [169, 169, 167, 166], y: [576, 587, 600, 613], turn: 0 },
  { name: "14号线东段", x: [204, 204, 201, 200, 201, 201], y: [579, 590, 603, 616, 630, 643], turn: 0 },
  { name: "八通线", x: [552, 557, 563], y: [603, 617, 630], turn: -30 },
];

type ShieldKind = "provincial" | "county" | "national" | "trunk";
const shieldFill: Record<ShieldKind, [string, string]> = {
  provincial: ["#e08a45", "#5f9c3c"],
  national: ["#cf5560", "#5f9c3c"],
  county: ["#c9b537", "#c9b537"],
  trunk: ["#e5765a", "#e5765a"],
};

const shields: [string, number, number, number, ShieldKind][] = [
  ["S11", 203, 146, 27, "provincial"], ["S32", 313, 199, 27, "provincial"], ["S331", 785, 26, 36, "county"],
  ["S214", 561, 271, 36, "county"], ["S201", 623, 371, 36, "county"], ["S51", 419, 366, 27, "provincial"],
  ["S51", 398, 483, 27, "provincial"], ["G102", 409, 558, 38, "trunk"], ["G1N", 729, 311, 30, "national"],
  ["G1N", 771, 297, 29, "national"], ["G1N", 839, 305, 29, "national"],
];

const pins: [number, number][] = [[214, 286], [359, 302], [175, 386], [13, 450], [219, 450], [273, 591]];

const MapDrawing = () => (
  <MapCanvas viewBox="0 0 855 682" preserveAspectRatio="xMinYMin slice" role="img" aria-label="车辆行驶地图">
    {tiles.map((t) => (
      <g key={`${t.x}${t.y}`} transform={`translate(${t.x} ${t.y}) scale(0.33333)`} fill="none" strokeLinejoin="round">
        <path d={t.areas} fill="#06202f" opacity="0.8" />
        {t.rivers?.map(([d, w]) => <path key={d} d={d} stroke="#051f2e" strokeWidth={w} />)}
        {t.dashes && <path d={t.dashes} stroke="#04121c" strokeWidth="5" strokeDasharray="36 22" />}
        <path d={t.roads} stroke="#010304" strokeWidth="7" />
        {t.bold && <path d={t.bold} stroke="#010304" strokeWidth="11" />}
        <path d={t.highways} stroke="#237f92" strokeWidth="16" />
        <path d={t.highways} stroke="#02090d" strokeWidth="8" />
        {t.rails.map((r) => (
          <g key={r.d}>
            <path d={r.d} stroke="#454b50" strokeWidth="15" />
            <path d={r.d} stroke={r.color} strokeWidth="10" />
          </g>
        ))}
      </g>
    ))}
    {placeNames.map(([name, x, y, turn]) => (
      <MapLabel key={name + y} x={x} y={y} transform={turn ? `rotate(${turn} ${x} ${y})` : undefined}>{name}</MapLabel>
    ))}
    {stackedNames.map((s) => (
      <MapLabel key={s.name + s.y[0]} x={s.x.join(" ")} y={s.y.join(" ")} rotate={s.turn}>{s.name}</MapLabel>
    ))}
    <rect x="108" y="539" width="47" height="16" fill="#05080a" />
    <DistrictLabel x="109" y="552">朝阳区</DistrictLabel>
    <rect x="574" y="568" width="46" height="17" fill="#05080a" />
    <DistrictLabel x="574" y="582">通州区</DistrictLabel>
    {shields.map(([name, x, y, w, kind]) => (
      <g key={`${name}${x}`}>
        <rect x={x} y={y} width={w} height="14" rx="1" fill={shieldFill[kind][1]} />
        <rect x={x} y={y} width={w} height="4" fill={shieldFill[kind][0]} />
        <ShieldText x={x + w / 2} y={y + 12}>{name}</ShieldText>
      </g>
    ))}
    {[[120, 328], [140, 516], [475, 505]].map(([x, y]) => (
      <g key={x} transform={`translate(${x} ${y})`}>
        <circle r="7.500" fill="#d8cdc8" />
        <path d="M-4 3h8M-3 1h6M0 1v-6l2.500 3" stroke="#54443f" fill="none" strokeWidth="1.300" />
      </g>
    ))}
    <g transform="translate(478 97)">
      <circle r="7.500" fill="#cfdcf0" />
      <path d="M0-5l1 3.500L5 1v1L1 1l-.5 3L2 5h-4l1.500-1L-1 1l-4 1V1l4-2.500z" fill="#2d4f8c" />
    </g>
    <g transform="translate(96 595)">
      <circle r="7.500" fill="#bdd0ea" />
      <path d="M-4 1L0-4 4 1M-3 1v3h6V1M-1 0h2v2h-2z" stroke="#2d5fa8" fill="none" strokeWidth="1.400" />
    </g>
    <path d="M20 577l5-2 1-4h12l1 4 5 2-2 3 2 6H19l2-6z" fill="#d8392c" />
    <path d="M26 585v-2M30 585v-2M34 585v-2M38 585v-2" stroke="#f4c8bc" />
    {pins.map(([x, y]) => (
      <g key={`${x}${y}`} transform={`translate(${x} ${y})`}>
        <path d="M0 30Q-3 24-8 19A11.500 11.500 0 1 1 8 19Q3 24 0 30z" fill="#ee2f31" />
        <path d="M-8 5A9 9 0 0 1 5 2" stroke="#f57b7b" fill="none" />
      </g>
    ))}
    <g fontFamily={uiFont} fontWeight="700" fontSize="20" fill="#e01f1f" stroke="#fff" strokeWidth="5" strokeLinejoin="round" paintOrder="stroke">
      <text x="5" y="655">Bai</text>
      <text x="64" y="655" fontSize="16">地图</text>
    </g>
    {["#fff", "#2319dc"].map((tone, i) => (
      <g key={tone} fill={tone} stroke={tone} strokeWidth={i === 0 ? 5 : 0}>
        <ellipse cx="39" cy="638" rx="4" ry="5" />
        <ellipse cx="45" cy="631" rx="4" ry="5" />
        <ellipse cx="54" cy="631" rx="4" ry="5" />
        <ellipse cx="59" cy="639" rx="4" ry="5" />
        <path d="M48 638q5 0 7 5t5 7q0 6-6 6H43q-6 0-6-6 0-3 4-6t7-6z" />
      </g>
    ))}
  </MapCanvas>
);

/* ---------- page ---------- */

const stats = [
  { color: "#ffff43", items: [{ label: "车辆总数(辆)", icon: <TaxiBadge /> }, { label: "车辆使用数(辆)", icon: <UploadBadge /> }] },
  { color: "#25f3e6", items: [{ label: "行驶里程总数(km)", icon: <TimerBadge /> }, { label: "行驶里程平均数(km)", icon: <ScaleBadge /> }] },
  { color: "#ff4e4e", items: [{ label: "行驶时长总数(s)", icon: <HourglassBadge /> }, { label: "行驶ihfj平均数(s)", icon: <ScaleBadge /> }] },
];

const Panel = ({ title, icon, tall, children }: { title: string; icon: React.ReactNode; tall?: boolean; children: React.ReactNode }) => (
  <PanelBox $tall={tall}>
    <PanelTitle $share={tall ? "30%" : "60%"}>
      {icon}
      {title}
    </PanelTitle>
    {children}
  </PanelBox>
);

export default function App() {
  return (
    <>
      <GlobalStyle />
      <Shell>
        <Page>
          <Header>
            <Nav>
              <NavLink href="#overview" $active><ListIcon />数据概览</NavLink>
              <NavLink href="#monitor"><TruckIcon />车辆监控</NavLink>
              <NavLink href="#map"><BankIcon />地图界面</NavLink>
            </Nav>
            <Brand>
              <BrandFrame viewBox="0 0 555 96" preserveAspectRatio="none" aria-hidden="true">
                <path d="M1 0L9 86H546L554 0" fill="none" stroke="#042a46" strokeWidth="2" />
                <path d="M8 85H547L546 94H9Z" fill="#032c49" />
              </BrandFrame>
              <BrandTitle>xx区智慧旅游综合服务平台</BrandTitle>
              <BrandSubtitle>Comprehensive service platform for smart tourism</BrandSubtitle>
            </Brand>
            <Nav>
              <NavLink href="#query"><BarsIcon />查询统计</NavLink>
              <NavLink href="#entry"><GearIcon />信息录入</NavLink>
              <NavLink href="#tables"><FormIcon />表格界面</NavLink>
            </Nav>
          </Header>
          <SectionTag><BarsIcon />总体概况</SectionTag>
          <StatRow>
            {stats.map((card) => (
              <StatCard key={card.color}>
                {card.items.map((item) => (
                  <Stat key={item.label} $color={card.color}>
                    <StatBadge>{item.icon}</StatBadge>
                    <StatText>
                      <StatLabel>{item.label}</StatLabel>
                      <StatValue>12356</StatValue>
                    </StatText>
                  </Stat>
                ))}
              </StatCard>
            ))}
          </StatRow>
          <Board>
            <Column>
              <Panel title="车辆类型统计" icon={<CarIcon />}><DonutChart /></Panel>
              <Panel title="车辆状态统计" icon={<MonitorIcon />}><StatusChart /></Panel>
            </Column>
            <Panel title="车辆行驶地图" icon={<RouteIcon />} tall>
              <MapArea>
                <MapDrawing />
                <CityPicker>
                  <CitySelect aria-label="城市" defaultValue="北京市">
                    <option>北京市</option>
                  </CitySelect>
                  <Caret />
                </CityPicker>
                <LayerSwitch>
                  <LayerButton type="button" $active>地图</LayerButton>
                  <LayerButton type="button">混合</LayerButton>
                </LayerSwitch>
              </MapArea>
            </Panel>
            <Column>
              <Panel title="车辆行驶统计" icon={<ChartIcon />}><LineChart /></Panel>
              <Panel title="车辆报警统计" icon={<AlarmIcon />}><AlarmChart /></Panel>
            </Column>
          </Board>
        </Page>
        <ScrollRail>
          <ScrollTrack>
            <ScrollThumb />
          </ScrollTrack>
        </ScrollRail>
      </Shell>
      <SystemNotice>
        <SystemNoticeTitle>激活 Windows</SystemNoticeTitle>
        <p>转到“设置”以激活 Windows。</p>
      </SystemNotice>
    </>
  );
}
